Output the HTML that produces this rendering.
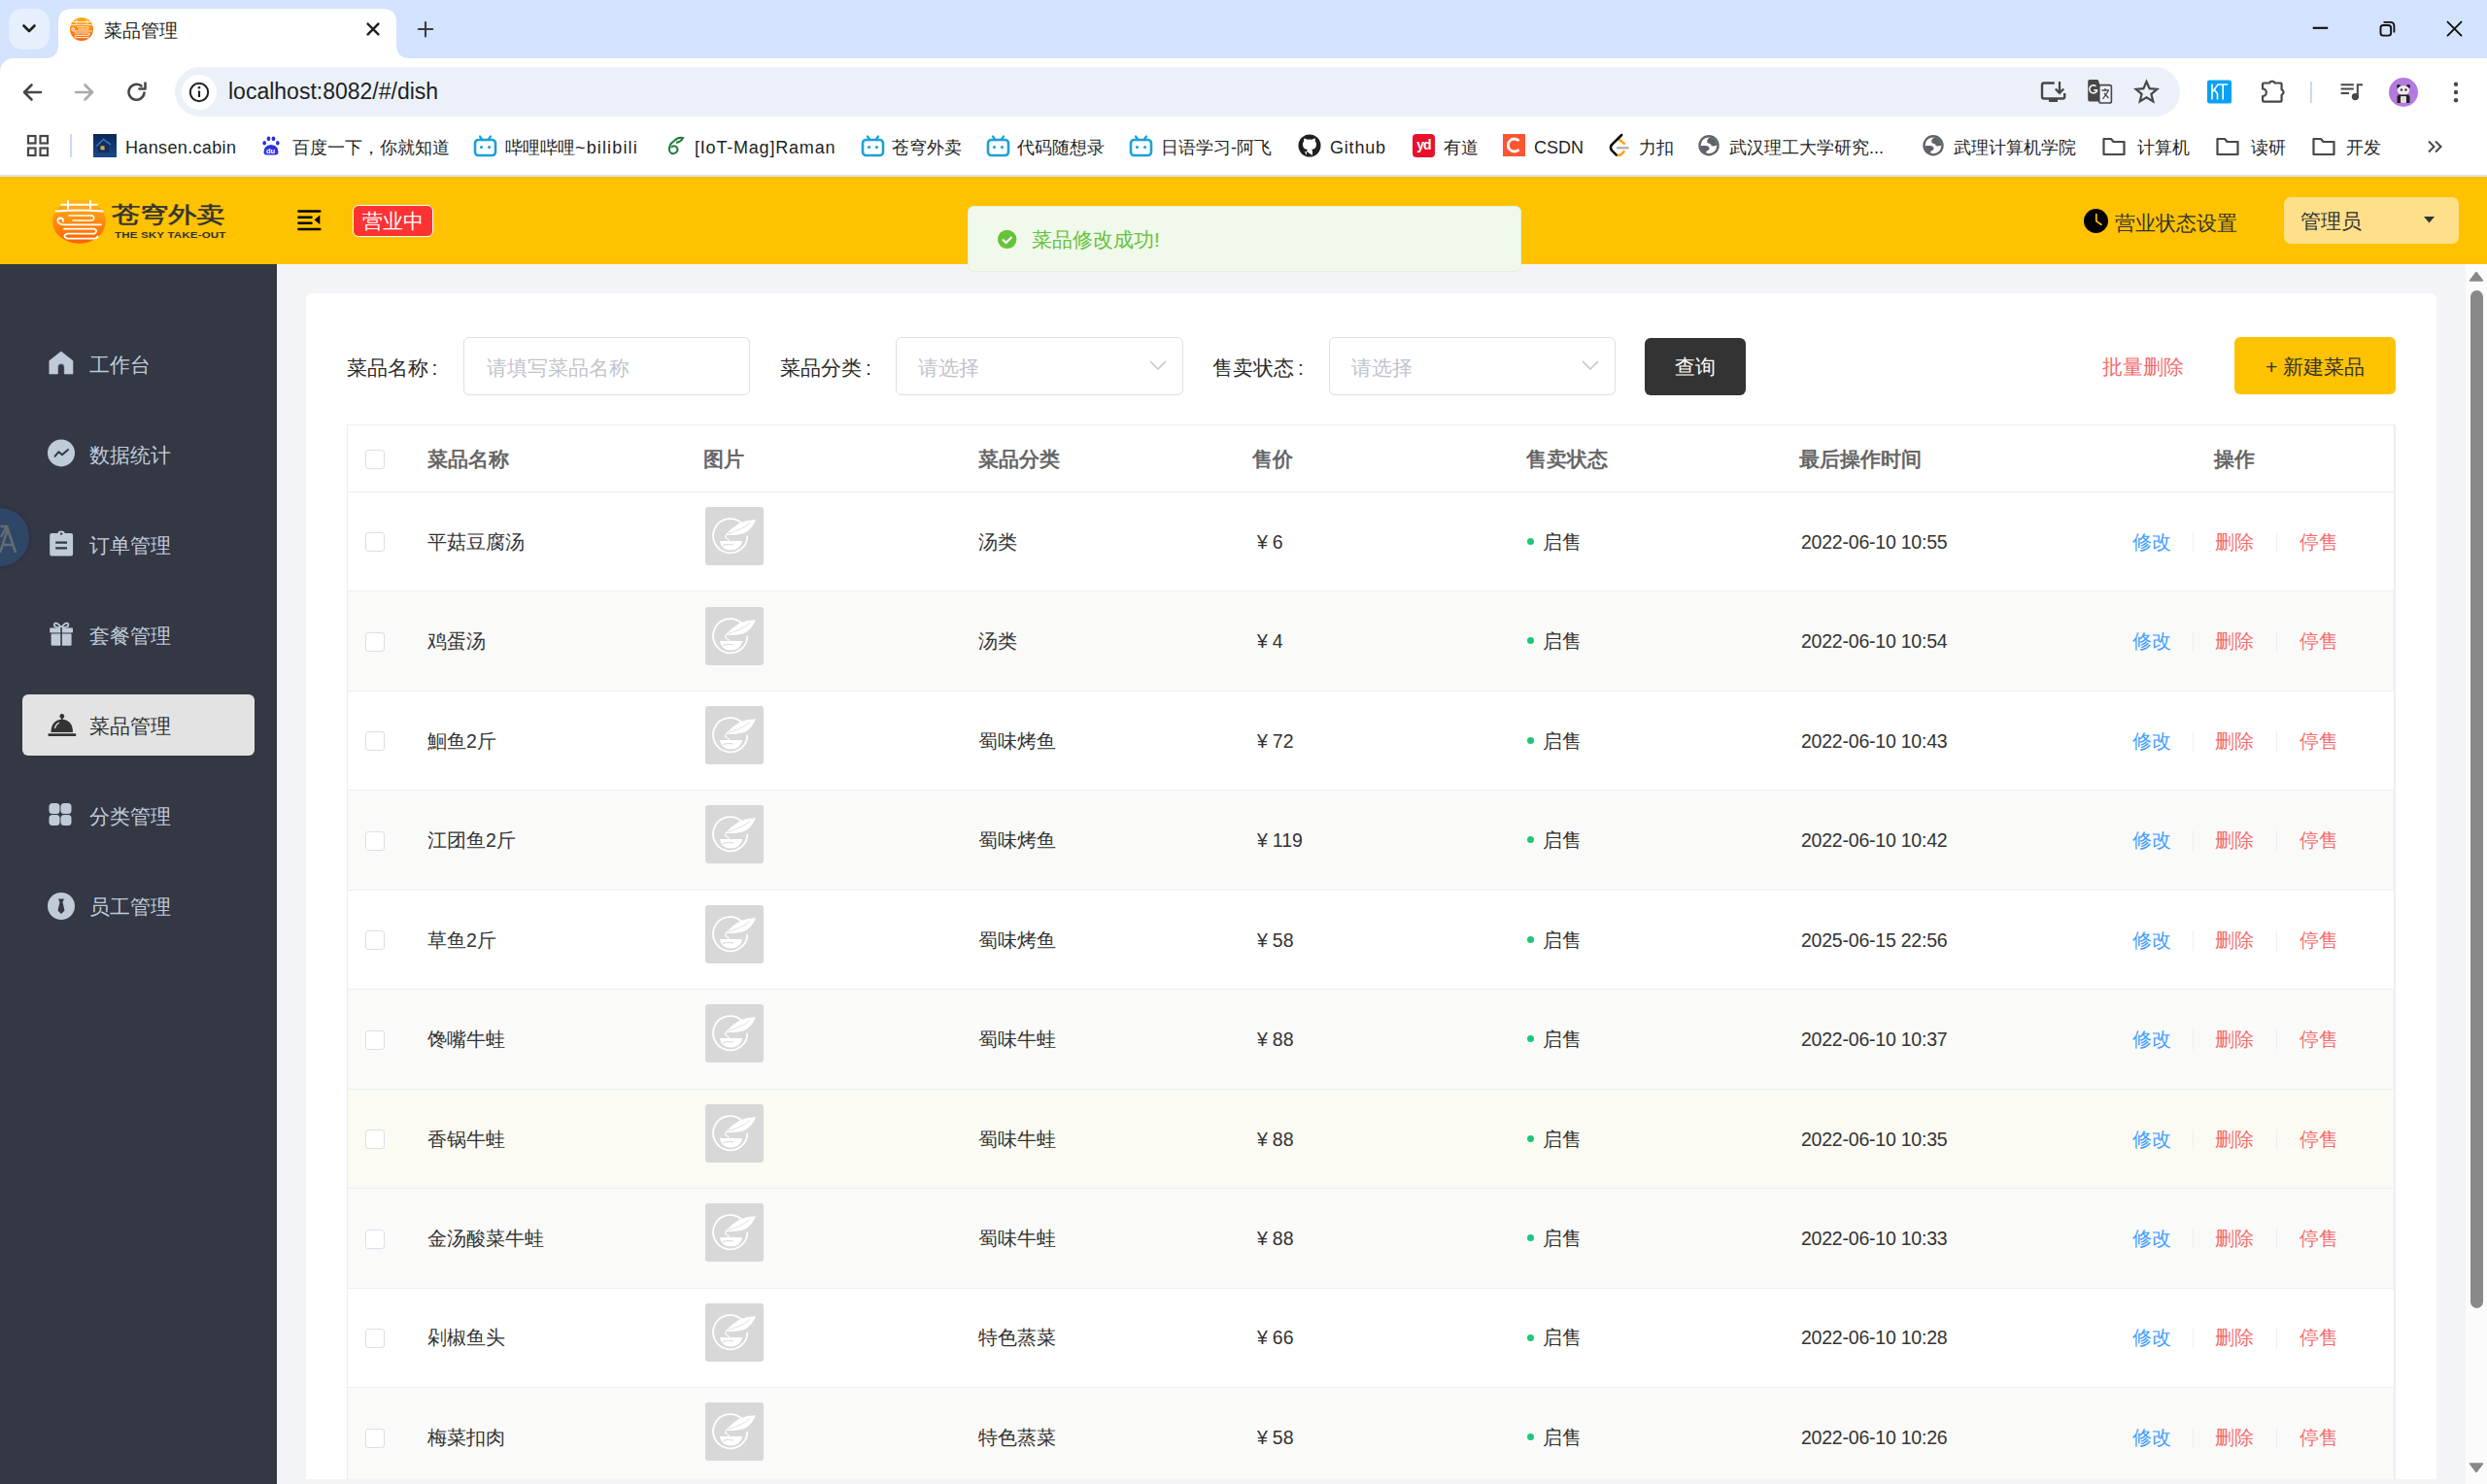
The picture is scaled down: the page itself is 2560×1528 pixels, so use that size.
<!DOCTYPE html>
<html><head><meta charset="utf-8"><title>菜品管理</title>
<style>
*{box-sizing:border-box;margin:0;padding:0}
html,body{width:2560px;height:1528px;overflow:hidden;background:#fff}
body{position:relative;font-family:"Liberation Sans",sans-serif;color:#333}
.a{position:absolute}
.t{position:absolute;white-space:nowrap}
svg{position:absolute;overflow:visible}
/* chrome */
#tabs{left:0;top:0;width:2560px;height:60px;background:#d3e3fd}
#tb{left:0;top:60px;width:2560px;height:120px;background:#fff}
#bline{left:0;top:180px;width:2560px;height:2px;background:#dfe1e5}
.bm{font-size:18px;color:#1f1f1f;top:139.5px;height:24px;line-height:24px}
/* header */
#hdr{left:0;top:182px;width:2560px;height:90px;background:#ffc200}
#side{left:0;top:272px;width:285px;height:1256px;background:#343744}
#main{left:285px;top:272px;width:2253px;height:1256px;background:#f3f4f7}
#sb{left:2538px;top:272px;width:22px;height:1256px;background:#fbfbfb}
.mi{left:92px;font-size:21px;color:#bfcbd9;height:30px;line-height:30px}
#card{left:315px;top:302px;width:2193px;height:1221px;background:#fff;border-radius:6px 6px 0 0}
.lbl{font-size:21px;color:#2a2a2a;height:30px;line-height:30px;top:363.5px}
.inp{top:347px;height:60px;border:1.5px solid #dcdfe6;border-radius:6px;background:#fff}
.ph{font-size:21px;color:#c0c4cc;height:30px;line-height:30px;top:363.5px}
.th{font-size:21px;font-weight:bold;color:#666;top:458px;height:30px;line-height:30px}
.row{position:absolute;left:357px;width:2108px;height:102px}
.rbg{position:absolute;left:358px;width:2106px}
.rbd{position:absolute;left:358px;width:2106px;height:1px;background:#ebeef5}
.cb{position:absolute;left:19px;width:20px;height:20px;border:1.5px solid #dcdfe6;border-radius:3px;background:#fff}
.td{position:absolute;font-size:19.5px;color:#333;height:30px;line-height:30px;white-space:nowrap}
.img{position:absolute;left:369px;width:60px;height:60px;background:#d8d8d8;border-radius:3px}
.dot{position:absolute;left:1215px;width:7px;height:7px;border-radius:50%;background:#1dc779}
.sep{position:absolute;width:1.5px;height:21px;background:#ebeef5}
.blue{color:#419eff}.red{color:#f56c6c}
</style></head><body>

<!-- ============ BROWSER CHROME ============ -->
<div id="tabs" class="a"></div>
<div class="a" style="left:9px;top:9px;width:42px;height:42px;border-radius:14px;background:#e7eefc"></div>
<svg style="left:0;top:0" width="60" height="60"><path d="M24.5 26.5 L30 32 L35.5 26.5" fill="none" stroke="#1f1f1f" stroke-width="2.6" stroke-linecap="round" stroke-linejoin="round"/></svg>
<!-- active tab -->
<svg style="left:46px;top:9px" width="376" height="52"><path d="M0 51 Q14 51 14 37 L14 14 Q14 0 28 0 L348 0 Q362 0 362 14 L362 37 Q362 51 376 51 Z" fill="#fff"/></svg>
<svg style="left:72px;top:18px" width="24" height="24"><defs><linearGradient id="fg" x1="0" y1="0" x2="0" y2="1"><stop offset="0" stop-color="#ffae1a"/><stop offset="1" stop-color="#ff5f00"/></linearGradient></defs><circle cx="12" cy="12" r="12" fill="url(#fg)"/><g fill="none" stroke="#fff" stroke-linecap="round" opacity=".8" transform="translate(12,12.5) scale(0.46) translate(-81.4,-228)"><path d="M63 210.8 H100 M70 207 V214.5 M93 207 V214.5" stroke-width="2.4"/><path d="M57.8 217.6 Q81 215.5 105.5 217.6" stroke-width="2.4"/><path d="M71 222 H95 Q98.5 224.5 95 227 H75" stroke-width="2.4"/><path d="M104 231.3 H69 Q61 232 59.5 228 Q59 224.5 62.5 224.5 Q65.5 225 65 228" stroke-width="2.6"/><path d="M66 235.6 H97 Q101.5 238 97 240.6 H69 Q63.5 243 69 245.6 H97" stroke-width="2.6"/></g></svg>
<div class="t" style="left:107px;top:18px;font-size:18.5px;height:28px;line-height:28px;color:#1f1f1f">菜品管理</div>
<svg style="left:372px;top:18px" width="24" height="24"><path d="M6.8 6.8 L17.2 17.2 M17.2 6.8 L6.8 17.2" stroke="#1f1f1f" stroke-width="2.4" stroke-linecap="square"/></svg>
<svg style="left:425px;top:18px" width="24" height="24"><path d="M13 5 V19.5 M5.8 12 H20.2" stroke="#3c3c3c" stroke-width="2.1" stroke-linecap="round"/></svg>
<!-- window controls -->
<svg style="left:2360px;top:0" width="200" height="60"><path d="M20.7 28.8 H36.2" stroke="#111" stroke-width="2.2"/><rect x="90.5" y="26" width="10.6" height="10.6" rx="2.6" fill="none" stroke="#111" stroke-width="1.9"/><path d="M93.5 22.9 H100.5 Q104.4 22.9 104.4 26.8 V33.5" fill="none" stroke="#111" stroke-width="1.9"/><path d="M159.5 22.6 L173.5 36.6 M173.5 22.6 L159.5 36.6" stroke="#111" stroke-width="1.9" stroke-linecap="round"/></svg>



<!-- toolbar -->
<div id="tb" class="a"></div>
<svg style="left:0;top:60px" width="16" height="16"><path d="M0 0 H14 A14 14 0 0 0 0 14 Z" fill="#d3e3fd"/></svg>
<svg style="left:15px;top:77px" width="36" height="36"><path d="M27 18 H10 M17.5 10.5 L10 18 L17.5 25.5" fill="none" stroke="#474747" stroke-width="2.6" stroke-linecap="round" stroke-linejoin="round"/></svg>
<svg style="left:69px;top:77px" width="36" height="36"><path d="M9 18 H26 M18.5 10.5 L26 18 L18.5 25.5" fill="none" stroke="#a8a8a8" stroke-width="2.6" stroke-linecap="round" stroke-linejoin="round"/></svg>
<svg style="left:123px;top:77px" width="36" height="36"><path d="M25.5 18.5 A8 8 0 1 1 22.5 11.5" fill="none" stroke="#474747" stroke-width="2.6" stroke-linecap="round"/><path d="M26.5 8.5 V14.5 H20.5" fill="none" stroke="#474747" stroke-width="2.6" stroke-linecap="round" stroke-linejoin="round"/></svg>
<div class="a" style="left:180px;top:69px;width:2064px;height:51px;border-radius:25.5px;background:#ecf1f9"></div>
<div class="a" style="left:187px;top:76.5px;width:36px;height:36px;border-radius:50%;background:#fff"></div>
<svg style="left:187px;top:76.5px" width="36" height="36"><circle cx="18" cy="18" r="9.2" fill="none" stroke="#1f1f1f" stroke-width="2"/><path d="M18 16.5 V23" stroke="#1f1f1f" stroke-width="2.2"/><circle cx="18" cy="13.2" r="1.3" fill="#1f1f1f"/></svg>
<div class="t" style="left:235px;top:78px;font-size:23px;height:32px;line-height:32px;color:#1f1f1f">localhost:8082/#/dish</div>
<!-- right toolbar icons -->
<svg style="left:2090px;top:70px" width="40" height="40"><path d="M24.8 15.5 H14 Q12 15.5 12 17.5 V29.5 Q12 31.5 14 31.5 H33.2 Q35.2 31.5 35.2 29.5 V26" fill="none" stroke="#474747" stroke-width="2.4"/><rect x="19" y="31.5" width="9" height="3.5" fill="#474747"/><path d="M30 14 V25.5 M25.8 21.5 L30 25.8 L34.2 21.5" fill="none" stroke="#474747" stroke-width="2.3"/></svg>
<svg style="left:2140px;top:70px" width="40" height="40"><path d="M11 12 H19.5 L21.5 17 V31.5 L23 34.5 H11 Q9.2 34.5 9.2 32.5 V14 Q9.2 12 11 12 Z" fill="#474747"/><rect x="20.8" y="17.6" width="12.6" height="18.4" rx="1.8" fill="#edf2fa" stroke="#474747" stroke-width="1.6"/><path d="M18.8 22.5 A4 4 0 1 1 17.5 18.8 M15.2 22.8 H19" fill="none" stroke="#fff" stroke-width="1.5"/><path d="M23.5 23 H31 M27 21 V23 M24.5 32 L30 24 M26 26 L30.5 31" fill="none" stroke="#474747" stroke-width="1.3"/></svg>
<svg style="left:2194px;top:80px" width="30" height="30"><path d="M15.5 4 L18.6 11.2 L26.3 11.8 L20.4 16.8 L22.3 24.4 L15.5 20.3 L8.7 24.4 L10.6 16.8 L4.7 11.8 L12.4 11.2 Z" fill="none" stroke="#474747" stroke-width="2.2" stroke-linejoin="miter"/></svg>
<svg style="left:2272px;top:82px" width="25" height="25"><rect x="0" y="0.5" width="25" height="24" rx="2.5" fill="#0aa0f5"/><path d="M5 4.5 V20.5 M5 13 L11.5 4.5 M7.5 10.5 L10.5 14.5 V20.5 M11.5 5 H21 M16.2 5 V20.5" fill="none" stroke="#fff" stroke-width="1.6"/></svg>
<svg style="left:2320px;top:70px" width="40" height="40"><path d="M10.2 15.5 H16 A3 3 0 0 1 21.6 15.5 H27.5 Q28.6 15.5 28.6 16.6 V22.2 A3 3 0 0 1 28.6 27.8 V33.5 Q28.6 34.6 27.5 34.6 H10.2 Q9.1 34.6 9.1 33.5 V29 A3.6 3.6 0 0 0 9.1 21.5 V16.6 Q9.1 15.5 10.2 15.5 Z" fill="none" stroke="#474747" stroke-width="2.2" stroke-linejoin="round"/></svg>
<div class="a" style="left:2378px;top:84px;width:2px;height:22px;background:#c7daf8"></div>
<svg style="left:2400px;top:70px" width="40" height="40"><path d="M9.6 17.2 H22.8 M9.6 21.4 H22.8 M9.6 25.9 H18" stroke="#474747" stroke-width="2"/><path d="M26.8 31 V17.2 H32" fill="none" stroke="#474747" stroke-width="2"/><circle cx="24.4" cy="29.6" r="3.6" fill="#474747"/></svg>
<div class="a" style="left:2459px;top:80px;width:30px;height:30px;border-radius:50%;background:#b47ae0"></div>
<svg style="left:2459px;top:80px" width="30" height="30"><circle cx="10" cy="9" r="2" fill="#222"/><circle cx="20" cy="9" r="2" fill="#222"/><ellipse cx="15" cy="13" rx="6.2" ry="4.8" fill="#eee"/><circle cx="13" cy="12.5" r="1.2" fill="#333"/><circle cx="17.5" cy="12.5" r="1.2" fill="#333"/><path d="M8.5 26 V20 Q8.5 17.5 11 17.5 H19 Q21.5 17.5 21.5 20 V26 Z" fill="#222"/><rect x="12" y="19" width="6" height="7" rx="1" fill="#ddd"/></svg>
<svg style="left:2513px;top:80px" width="30" height="30"><circle cx="15" cy="6.8" r="2.2" fill="#474747"/><circle cx="15" cy="15" r="2.2" fill="#474747"/><circle cx="15" cy="23.3" r="2.2" fill="#474747"/></svg>

<!-- bookmarks -->
<svg style="left:26px;top:137px" width="26" height="26"><g fill="none" stroke="#474747" stroke-width="2.2"><rect x="3" y="3" width="7.5" height="7.5"/><rect x="15.5" y="3" width="7.5" height="7.5"/><rect x="3" y="15.5" width="7.5" height="7.5"/><rect x="15.5" y="15.5" width="7.5" height="7.5"/></g></svg>
<div class="a" style="left:72px;top:138px;width:2px;height:24px;background:#c7daf8"></div>
<div class="a" style="left:96px;top:138px;width:24px;height:24px;background:linear-gradient(#0a2656,#1a4a8a)"></div>
<svg style="left:96px;top:138px" width="24" height="24"><path d="M3.5 12.5 L10.5 5.5 L18 11" fill="none" stroke="#3d7fd0" stroke-width="1.4"/><path d="M5 12 L10.5 6.8 L16.5 11.5 V19 H5 Z" fill="#132f5a"/><rect x="7.5" y="12.3" width="4" height="4" fill="#ff9a30"/><rect x="9.6" y="14.4" width="1.8" height="1.8" fill="#40d8ff"/></svg>
<div class="t bm" style="left:129px;letter-spacing:0.35px">Hansen.cabin</div>
<svg style="left:267px;top:139px" width="24" height="24"><g fill="#2932e1"><ellipse cx="9.5" cy="3.8" rx="1.9" ry="2.4"/><ellipse cx="14.5" cy="3.8" rx="1.9" ry="2.4"/><ellipse cx="5.2" cy="8.3" rx="1.8" ry="2.2"/><ellipse cx="18.8" cy="8.3" rx="1.8" ry="2.2"/><path d="M4.5 17.5 Q4.5 10.5 12 10 Q19.5 10.5 19.5 17.5 Q19.5 20.5 16.5 20.5 H7.5 Q4.5 20.5 4.5 17.5 Z"/></g><text x="7" y="18.6" font-size="7.5" fill="#fff" font-family="Liberation Sans" font-weight="bold">du</text></svg>
<div class="t bm" style="left:301px">百度一下，你就知道</div>
<svg class="bili" style="left:487px;top:138px" width="25" height="25"><path d="M7 2.5 L9.5 6 M18 2.5 L15.5 6" stroke="#1da1d8" stroke-width="2.2" stroke-linecap="round"/><rect x="2" y="6" width="21" height="16" rx="3.5" fill="none" stroke="#1da1d8" stroke-width="2.6"/><circle cx="8.5" cy="13.5" r="1.6" fill="#1da1d8"/><circle cx="16.5" cy="13.5" r="1.6" fill="#1da1d8"/></svg>
<div class="t bm" style="left:520px">哔哩哔哩<span style="letter-spacing:1.15px">~bilibili</span></div>
<svg style="left:684px;top:139px" width="22" height="24"><path d="M10 6 Q4 10 5 16 Q7 21 12 18 Q15 15 12 12 Q9 10 7 13 M10 6 Q14 2 19 3 Q17 7 12 8" fill="none" stroke="#1c7a3a" stroke-width="2"/></svg>
<div class="t bm" style="left:715px;letter-spacing:0.8px">[IoT-Mag]Raman</div>
<svg style="left:886px;top:138px" width="25" height="25"><path d="M7 2.5 L9.5 6 M18 2.5 L15.5 6" stroke="#1da1d8" stroke-width="2.2" stroke-linecap="round"/><rect x="2" y="6" width="21" height="16" rx="3.5" fill="none" stroke="#1da1d8" stroke-width="2.6"/><circle cx="8.5" cy="13.5" r="1.6" fill="#1da1d8"/><circle cx="16.5" cy="13.5" r="1.6" fill="#1da1d8"/></svg>
<div class="t bm" style="left:918px">苍穹外卖</div>
<svg style="left:1015px;top:138px" width="25" height="25"><path d="M7 2.5 L9.5 6 M18 2.5 L15.5 6" stroke="#1da1d8" stroke-width="2.2" stroke-linecap="round"/><rect x="2" y="6" width="21" height="16" rx="3.5" fill="none" stroke="#1da1d8" stroke-width="2.6"/><circle cx="8.5" cy="13.5" r="1.6" fill="#1da1d8"/><circle cx="16.5" cy="13.5" r="1.6" fill="#1da1d8"/></svg>
<div class="t bm" style="left:1047px">代码随想录</div>
<svg style="left:1162px;top:138px" width="25" height="25"><path d="M7 2.5 L9.5 6 M18 2.5 L15.5 6" stroke="#1da1d8" stroke-width="2.2" stroke-linecap="round"/><rect x="2" y="6" width="21" height="16" rx="3.5" fill="none" stroke="#1da1d8" stroke-width="2.6"/><circle cx="8.5" cy="13.5" r="1.6" fill="#1da1d8"/><circle cx="16.5" cy="13.5" r="1.6" fill="#1da1d8"/></svg>
<div class="t bm" style="left:1195px">日语学习-阿飞</div>
<svg style="left:1336px;top:138px" width="24" height="24"><circle cx="12" cy="12" r="11.5" fill="#1f1f1f"/><path d="M9 22 V18.5 Q6 18 5.5 15.5 M15 22 V18 Q15 16.5 14 16 Q19 15.5 19 10.5 Q19 8.5 17.8 7.5 Q18.2 5.5 17.5 4.5 Q16 4.5 14.5 5.8 Q12 5.2 9.5 5.8 Q8 4.5 6.5 4.5 Q5.8 5.5 6.2 7.5 Q5 8.5 5 10.5 Q5 15.5 10 16 Q9 16.5 9 18" fill="#fff"/></svg>
<div class="t bm" style="left:1369px;letter-spacing:0.8px">Github</div>
<div class="a" style="left:1454px;top:138px;width:23px;height:24px;border-radius:4px;background:#e8112d"></div>
<div class="t" style="left:1454px;top:138px;width:23px;font-size:14px;font-weight:bold;color:#fff;height:22px;line-height:22px;text-align:center;letter-spacing:-1px">yd</div>
<div class="t bm" style="left:1486px">有道</div>
<div class="a" style="left:1547px;top:138px;width:23px;height:23px;background:#fc5531"></div>
<svg style="left:1547px;top:138px" width="23" height="23"><path d="M16.5 7 A6.5 6.5 0 1 0 16.5 16" fill="none" stroke="#fff" stroke-width="2.8"/></svg>
<div class="t bm" style="left:1579px">CSDN</div>
<svg style="left:1650px;top:134px" width="30" height="32"><path d="M15.1 18.3 H25.6" stroke="#b3b3b3" stroke-width="2.5" stroke-linecap="round"/><path d="M16.6 9.8 L21.8 13.8 M13.8 25.6 Q17.5 27.5 21.6 22" fill="none" stroke="#ffa116" stroke-width="2.5" stroke-linecap="round"/><path d="M19.2 5 L9 15 Q6.8 17.8 9 20.8 L13.6 25.4" fill="none" stroke="#000" stroke-width="2.5" stroke-linecap="round"/></svg>
<div class="t bm" style="left:1687px">力扣</div>
<svg style="left:1744px;top:136px" width="30" height="30"><circle cx="15" cy="13.8" r="10.7" fill="#5f6368"/><circle cx="15" cy="13.8" r="8.4" fill="#fff"/><path d="M16.5 5.5 Q13 6.5 13.2 10.2 Q13.5 11.8 16.3 12 Q17.3 12.5 17.3 13.6 Q18.5 14.8 20.5 14.3 Q22.6 13.9 23.3 13.4 A8.4 8.4 0 0 0 16.5 5.5 Z" fill="#5f6368"/><path d="M6.7 14 H11.5 Q15.5 14.2 15.5 17 Q15.5 18.8 13.5 19 Q12 19.4 12.2 22.2 A8.4 8.4 0 0 1 6.7 14 Z" fill="#5f6368"/></svg>
<div class="t bm" style="left:1780px">武汉理工大学研究...</div>
<svg style="left:1975px;top:136px" width="30" height="30"><circle cx="15" cy="13.8" r="10.7" fill="#5f6368"/><circle cx="15" cy="13.8" r="8.4" fill="#fff"/><path d="M16.5 5.5 Q13 6.5 13.2 10.2 Q13.5 11.8 16.3 12 Q17.3 12.5 17.3 13.6 Q18.5 14.8 20.5 14.3 Q22.6 13.9 23.3 13.4 A8.4 8.4 0 0 0 16.5 5.5 Z" fill="#5f6368"/><path d="M6.7 14 H11.5 Q15.5 14.2 15.5 17 Q15.5 18.8 13.5 19 Q12 19.4 12.2 22.2 A8.4 8.4 0 0 1 6.7 14 Z" fill="#5f6368"/></svg>
<div class="t bm" style="left:2011px">武理计算机学院</div>
<svg style="left:2163px;top:139px" width="26" height="24"><path d="M2.5 4 H10 L12.5 7 H23.5 V20 H2.5 Z" fill="none" stroke="#474747" stroke-width="2.2" stroke-linejoin="round"/></svg>
<div class="t bm" style="left:2200px">计算机</div>
<svg style="left:2280px;top:139px" width="26" height="24"><path d="M2.5 4 H10 L12.5 7 H23.5 V20 H2.5 Z" fill="none" stroke="#474747" stroke-width="2.2" stroke-linejoin="round"/></svg>
<div class="t bm" style="left:2317px">读研</div>
<svg style="left:2379px;top:139px" width="26" height="24"><path d="M2.5 4 H10 L12.5 7 H23.5 V20 H2.5 Z" fill="none" stroke="#474747" stroke-width="2.2" stroke-linejoin="round"/></svg>
<div class="t bm" style="left:2415px">开发</div>
<svg style="left:2496px;top:139px" width="22" height="24"><path d="M4 6.5 L9.5 12 L4 17.5 M11 6.5 L16.5 12 L11 17.5" fill="none" stroke="#474747" stroke-width="2"/></svg>
<div id="bline" class="a"></div>

<!-- ============ APP HEADER ============ -->
<div id="hdr" class="a"></div>
<svg style="left:50px;top:200px" width="64" height="56"><defs><linearGradient id="lg" x1="0" y1="0" x2="0" y2="1"><stop offset="0" stop-color="#ffb81c"/><stop offset="1" stop-color="#ff5f00"/></linearGradient></defs><ellipse cx="31.4" cy="28" rx="27.4" ry="22.8" fill="url(#lg)"/><g fill="none" stroke="#fff" stroke-linecap="round" transform="translate(-50,-200)"><path d="M63 210.8 H100 M70 207 V214.5 M93 207 V214.5" stroke-width="2"/><path d="M57.8 217.6 Q81 215.5 105.5 217.6" stroke-width="2"/><path d="M71 222 H95 Q98.5 224.5 95 227 H75" stroke-width="1.6"/><path d="M104 231.3 H69 Q61 232 59.5 228 Q59 224.5 62.5 224.5 Q65.5 225 65 228" stroke-width="1.8"/><path d="M66 235.6 H97 Q101.5 238 97 240.6 H69 Q63.5 243 69 245.6 H97 Q100 245.6 100.5 243.5" stroke-width="1.8"/></g></svg>
<div class="t" style="left:115px;top:203px;font-size:29px;font-weight:normal;-webkit-text-stroke:0.7px #333;color:#333;height:36px;line-height:36px;transform:scaleY(0.78);transform-origin:0 0;top:207px">苍穹外卖</div>
<div class="t" style="left:118px;top:235px;font-size:11.5px;font-weight:bold;color:#333;height:14px;line-height:14px;letter-spacing:0.2px;transform:scaleY(0.8);transform-origin:0 50%">THE SKY TAKE-OUT</div>
<svg style="left:300px;top:210px" width="36" height="34"><g stroke="#000" stroke-width="2.5" stroke-linecap="round"><path d="M7.4 7.4 H29.3 M7.4 25.9 H29.3 M7.4 13.8 H20.5 M7.4 19.7 H20.5"/></g><path d="M29.3 11.4 V21 L23.6 16.2 Z" fill="#000"/></svg>
<div class="a" style="left:363px;top:211px;width:83px;height:33px;background:#fd3333;border-radius:6px;border:1.2px solid #fff"></div>
<div class="t" style="left:363px;top:212px;width:83px;text-align:center;font-size:21px;color:#fff;height:31px;line-height:31px">营业中</div>
<svg style="left:2144px;top:214px" width="27" height="27"><circle cx="13.5" cy="13.5" r="12.5" fill="#000"/><path d="M13.8 6.6 V13.6 L18.9 17.2" fill="none" stroke="#ffc200" stroke-width="1.7" stroke-linecap="round"/></svg>
<div class="t" style="left:2177px;top:215px;font-size:21px;color:#333;height:30px;line-height:30px">营业状态设置</div>
<div class="a" style="left:2351px;top:203px;width:180px;height:48px;border-radius:7px;background:#ffe08a"></div>
<div class="t" style="left:2368px;top:213px;font-size:21px;color:#333;height:30px;line-height:30px">管理员</div>
<svg style="left:2490px;top:218px" width="22" height="16"><path d="M5 5 H16 L10.5 11.5 Z" fill="#333"/></svg>

<!-- toast placeholder (added later, on top) -->

<!-- ============ SIDEBAR ============ -->
<div id="side" class="a"></div>
<div id="main" class="a"></div>

<!-- sidebar menu -->
<svg style="left:49px;top:360px" width="28" height="28"><path d="M13.9 1.9 L26 11.5 V25 H17.3 V18 A3.4 3.4 0 0 0 10.5 18 V25 H1.8 V11.5 Z" fill="#bfcbd9" stroke="#bfcbd9" stroke-width="0.6" stroke-linejoin="round"/></svg>
<div class="t mi" style="top:361px">工作台</div>
<svg style="left:49px;top:452px" width="28" height="30"><circle cx="14" cy="14.4" r="14" fill="#bfcbd9"/><path d="M7.5 17.8 L11.5 13.2 L15 16.2 L21 11" fill="none" stroke="#343744" stroke-width="2" stroke-linecap="round" stroke-linejoin="round"/></svg>
<div class="t mi" style="top:454px">数据统计</div>
<svg style="left:49px;top:545px" width="28" height="30"><path d="M4.2 4 H10.5 Q11 1.6 14.1 1.6 Q17.2 1.6 17.7 4 H24.1 Q26.1 4 26.1 6 V25.4 Q26.1 27.4 24.1 27.4 H4.2 Q2.2 27.4 2.2 25.4 V6 Q2.2 4 4.2 4 Z" fill="#bfcbd9"/><circle cx="14.1" cy="4.6" r="1.2" fill="#343744"/><path d="M8.2 13.6 H20 M8.2 19.4 H20" stroke="#343744" stroke-width="2.2"/></svg>
<div class="t mi" style="top:547px">订单管理</div>
<svg style="left:49px;top:639px" width="28" height="28"><g fill="#bfcbd9"><rect x="2.2" y="7.5" width="23.8" height="5" rx="0.8"/><rect x="3.6" y="13.6" width="21" height="12.1" rx="0.8"/></g><path d="M14.1 7.2 Q10 1.5 7.5 2.8 Q5.8 4.5 8 6.3 Q10.5 7.4 14.1 7.2 Q17.7 7.4 20.2 6.3 Q22.4 4.5 20.7 2.8 Q18.2 1.5 14.1 7.2 Z" fill="none" stroke="#bfcbd9" stroke-width="1.8"/><path d="M14.1 7 V26" stroke="#343744" stroke-width="1.6"/></svg>
<div class="t mi" style="top:640px">套餐管理</div>
<div class="a" style="left:23px;top:715px;width:239px;height:63px;border-radius:6px;background:#e3e3e3"></div>
<svg style="left:48px;top:733px" width="32" height="28"><path d="M4.5 21 Q4.5 8.5 15.8 7.8 Q27 8.5 27 21 Z" fill="#333"/><circle cx="15.8" cy="4.5" r="2.4" fill="#333"/><rect x="15" y="4.5" width="1.6" height="4" fill="#333"/><rect x="1.4" y="22.3" width="29" height="2.8" rx="1.3" fill="#333"/><path d="M8.5 17 Q9.5 12.5 13 11.2" stroke="#ddd" stroke-width="1.3" fill="none"/></svg>
<div class="t mi" style="top:733px;color:#333">菜品管理</div>
<svg style="left:48px;top:825px" width="28" height="28"><g fill="#bfcbd9"><rect x="2.5" y="2" width="11" height="11" rx="3.5"/><rect x="14.5" y="2" width="11" height="11" rx="3.5"/><rect x="2.5" y="14" width="11" height="11" rx="3.5"/><rect x="14.5" y="14" width="11" height="11" rx="3.5"/></g></svg>
<div class="t mi" style="top:826px">分类管理</div>
<svg style="left:48px;top:918px" width="28" height="30"><circle cx="15" cy="15" r="14" fill="#bfcbd9"/><path d="M12 7.5 H18 L16.5 11 L18.5 19.5 L15 23 L11.5 19.5 L13.5 11 Z" fill="#343744"/></svg>
<div class="t mi" style="top:919px">员工管理</div>
<!-- translate float -->
<div class="a" style="left:-30px;top:523px;width:60px;height:60px;border-radius:50%;background:#2f4666;box-shadow:0 0 5px rgba(0,0,0,.18)"></div>
<svg style="left:0;top:535px" width="20" height="40"><path d="M0.5 7 H7 L1 18" fill="none" stroke="#666b73" stroke-width="2.4"/><path d="M0 34 L8 10 L16 34 M3 26 H13" fill="none" stroke="#666b73" stroke-width="2.6"/></svg>

<!-- card -->
<div id="card" class="a"></div>
<div class="t lbl" style="left:356.5px">菜品名称<span style="margin-left:4px">:</span></div>
<div class="a inp" style="left:477px;width:295px"></div>
<div class="t ph" style="left:501px">请填写菜品名称</div>
<div class="t lbl" style="left:803px">菜品分类<span style="margin-left:4px">:</span></div>
<div class="a inp" style="left:922px;width:296px"></div>
<div class="t ph" style="left:945px">请选择</div>
<svg style="left:1180px;top:366px" width="24" height="22"><path d="M4 6 L12 14 L20 6" fill="none" stroke="#c0c4cc" stroke-width="1.5"/></svg>
<div class="t lbl" style="left:1248px">售卖状态<span style="margin-left:4px">:</span></div>
<div class="a inp" style="left:1368px;width:295px"></div>
<div class="t ph" style="left:1391px">请选择</div>
<svg style="left:1625px;top:366px" width="24" height="22"><path d="M4 6 L12 14 L20 6" fill="none" stroke="#c0c4cc" stroke-width="1.5"/></svg>
<div class="a" style="left:1693px;top:348px;width:104px;height:58.5px;border-radius:6px;background:#333"></div>
<div class="t" style="left:1693px;top:363px;width:104px;text-align:center;font-size:21px;color:#fff;height:30px;line-height:30px">查询</div>
<div class="t lbl" style="left:2164px;top:362.5px;color:#f56c6c">批量删除</div>
<div class="a" style="left:2300px;top:347px;width:166px;height:58.5px;border-radius:6px;background:#ffc200"></div>
<div class="t" style="left:2300px;top:363px;width:166px;text-align:center;font-size:21px;color:#333;height:30px;line-height:30px">+ 新建菜品</div>

<!-- table -->
<div class="a" style="left:357px;top:437px;width:2108px;height:1090px;border:1.5px solid #ebeef5;border-bottom:none;background:#fff"></div>
<div class="a" style="left:357px;top:506px;width:2108px;height:1px;background:#ebeef5"></div>
<div class="cb" style="left:376px;top:463px"></div>
<div class="t th" style="left:440px">菜品名称</div>
<div class="t th" style="left:724px">图片</div>
<div class="t th" style="left:1007px">菜品分类</div>
<div class="t th" style="left:1289px">售价</div>
<div class="t th" style="left:1571px">售卖状态</div>
<div class="t th" style="left:1852px">最后操作时间</div>
<div class="t th" style="left:2279px">操作</div>
<div class="rbg" style="top:507px;height:101px;background:#fff"></div>
<div class="rbd" style="top:608px"></div>
<div class="row" style="top:506.68px"><div class="cb" style="top:41.7px"></div><div class="td" style="left:83px;top:36px">平菇豆腐汤</div><div class="img" style="top:15.4px"><svg width="60" height="60" style="left:0;top:0"><use href="#dish"/></svg></div><div class="td" style="left:650px;top:36px">汤类</div><div class="td" style="left:937px;top:36px">¥<span style="margin-left:5px">6</span></div><div class="dot" style="top:47.3px"></div><div class="td" style="left:1231px;top:36px">启售</div><div class="td" style="left:1497px;top:36px;letter-spacing:-0.22px">2022-06-10 10:55</div><div class="td blue" style="left:1838px;top:36px">修改</div><div class="sep" style="left:1899.7px;top:41.3px"></div><div class="td red" style="left:1923px;top:36px">删除</div><div class="sep" style="left:1985.7px;top:41.3px"></div><div class="td red" style="left:2010px;top:36px">停售</div></div>
<div class="rbg" style="top:609px;height:102px;background:#fafaf9"></div>
<div class="rbd" style="top:711px"></div>
<div class="row" style="top:609.15px"><div class="cb" style="top:41.7px"></div><div class="td" style="left:83px;top:36px">鸡蛋汤</div><div class="img" style="top:15.4px"><svg width="60" height="60" style="left:0;top:0"><use href="#dish"/></svg></div><div class="td" style="left:650px;top:36px">汤类</div><div class="td" style="left:937px;top:36px">¥<span style="margin-left:5px">4</span></div><div class="dot" style="top:47.3px"></div><div class="td" style="left:1231px;top:36px">启售</div><div class="td" style="left:1497px;top:36px;letter-spacing:-0.22px">2022-06-10 10:54</div><div class="td blue" style="left:1838px;top:36px">修改</div><div class="sep" style="left:1899.7px;top:41.3px"></div><div class="td red" style="left:1923px;top:36px">删除</div><div class="sep" style="left:1985.7px;top:41.3px"></div><div class="td red" style="left:2010px;top:36px">停售</div></div>
<div class="rbg" style="top:712px;height:101px;background:#fff"></div>
<div class="rbd" style="top:813px"></div>
<div class="row" style="top:711.62px"><div class="cb" style="top:41.7px"></div><div class="td" style="left:83px;top:36px">鮰鱼2斤</div><div class="img" style="top:15.4px"><svg width="60" height="60" style="left:0;top:0"><use href="#dish"/></svg></div><div class="td" style="left:650px;top:36px">蜀味烤鱼</div><div class="td" style="left:937px;top:36px">¥<span style="margin-left:5px">72</span></div><div class="dot" style="top:47.3px"></div><div class="td" style="left:1231px;top:36px">启售</div><div class="td" style="left:1497px;top:36px;letter-spacing:-0.22px">2022-06-10 10:43</div><div class="td blue" style="left:1838px;top:36px">修改</div><div class="sep" style="left:1899.7px;top:41.3px"></div><div class="td red" style="left:1923px;top:36px">删除</div><div class="sep" style="left:1985.7px;top:41.3px"></div><div class="td red" style="left:2010px;top:36px">停售</div></div>
<div class="rbg" style="top:814px;height:102px;background:#fafaf9"></div>
<div class="rbd" style="top:916px"></div>
<div class="row" style="top:814.10px"><div class="cb" style="top:41.7px"></div><div class="td" style="left:83px;top:36px">江团鱼2斤</div><div class="img" style="top:15.4px"><svg width="60" height="60" style="left:0;top:0"><use href="#dish"/></svg></div><div class="td" style="left:650px;top:36px">蜀味烤鱼</div><div class="td" style="left:937px;top:36px">¥<span style="margin-left:5px">119</span></div><div class="dot" style="top:47.3px"></div><div class="td" style="left:1231px;top:36px">启售</div><div class="td" style="left:1497px;top:36px;letter-spacing:-0.22px">2022-06-10 10:42</div><div class="td blue" style="left:1838px;top:36px">修改</div><div class="sep" style="left:1899.7px;top:41.3px"></div><div class="td red" style="left:1923px;top:36px">删除</div><div class="sep" style="left:1985.7px;top:41.3px"></div><div class="td red" style="left:2010px;top:36px">停售</div></div>
<div class="rbg" style="top:917px;height:101px;background:#fff"></div>
<div class="rbd" style="top:1018px"></div>
<div class="row" style="top:916.58px"><div class="cb" style="top:41.7px"></div><div class="td" style="left:83px;top:36px">草鱼2斤</div><div class="img" style="top:15.4px"><svg width="60" height="60" style="left:0;top:0"><use href="#dish"/></svg></div><div class="td" style="left:650px;top:36px">蜀味烤鱼</div><div class="td" style="left:937px;top:36px">¥<span style="margin-left:5px">58</span></div><div class="dot" style="top:47.3px"></div><div class="td" style="left:1231px;top:36px">启售</div><div class="td" style="left:1497px;top:36px;letter-spacing:-0.22px">2025-06-15 22:56</div><div class="td blue" style="left:1838px;top:36px">修改</div><div class="sep" style="left:1899.7px;top:41.3px"></div><div class="td red" style="left:1923px;top:36px">删除</div><div class="sep" style="left:1985.7px;top:41.3px"></div><div class="td red" style="left:2010px;top:36px">停售</div></div>
<div class="rbg" style="top:1019px;height:102px;background:#fafaf9"></div>
<div class="rbd" style="top:1121px"></div>
<div class="row" style="top:1019.05px"><div class="cb" style="top:41.7px"></div><div class="td" style="left:83px;top:36px">馋嘴牛蛙</div><div class="img" style="top:15.4px"><svg width="60" height="60" style="left:0;top:0"><use href="#dish"/></svg></div><div class="td" style="left:650px;top:36px">蜀味牛蛙</div><div class="td" style="left:937px;top:36px">¥<span style="margin-left:5px">88</span></div><div class="dot" style="top:47.3px"></div><div class="td" style="left:1231px;top:36px">启售</div><div class="td" style="left:1497px;top:36px;letter-spacing:-0.22px">2022-06-10 10:37</div><div class="td blue" style="left:1838px;top:36px">修改</div><div class="sep" style="left:1899.7px;top:41.3px"></div><div class="td red" style="left:1923px;top:36px">删除</div><div class="sep" style="left:1985.7px;top:41.3px"></div><div class="td red" style="left:2010px;top:36px">停售</div></div>
<div class="rbg" style="top:1122px;height:101px;background:#fbfbf3"></div>
<div class="rbd" style="top:1223px"></div>
<div class="row" style="top:1121.52px"><div class="cb" style="top:41.7px"></div><div class="td" style="left:83px;top:36px">香锅牛蛙</div><div class="img" style="top:15.4px"><svg width="60" height="60" style="left:0;top:0"><use href="#dish"/></svg></div><div class="td" style="left:650px;top:36px">蜀味牛蛙</div><div class="td" style="left:937px;top:36px">¥<span style="margin-left:5px">88</span></div><div class="dot" style="top:47.3px"></div><div class="td" style="left:1231px;top:36px">启售</div><div class="td" style="left:1497px;top:36px;letter-spacing:-0.22px">2022-06-10 10:35</div><div class="td blue" style="left:1838px;top:36px">修改</div><div class="sep" style="left:1899.7px;top:41.3px"></div><div class="td red" style="left:1923px;top:36px">删除</div><div class="sep" style="left:1985.7px;top:41.3px"></div><div class="td red" style="left:2010px;top:36px">停售</div></div>
<div class="rbg" style="top:1224px;height:102px;background:#fafaf9"></div>
<div class="rbd" style="top:1326px"></div>
<div class="row" style="top:1224.00px"><div class="cb" style="top:41.7px"></div><div class="td" style="left:83px;top:36px">金汤酸菜牛蛙</div><div class="img" style="top:15.4px"><svg width="60" height="60" style="left:0;top:0"><use href="#dish"/></svg></div><div class="td" style="left:650px;top:36px">蜀味牛蛙</div><div class="td" style="left:937px;top:36px">¥<span style="margin-left:5px">88</span></div><div class="dot" style="top:47.3px"></div><div class="td" style="left:1231px;top:36px">启售</div><div class="td" style="left:1497px;top:36px;letter-spacing:-0.22px">2022-06-10 10:33</div><div class="td blue" style="left:1838px;top:36px">修改</div><div class="sep" style="left:1899.7px;top:41.3px"></div><div class="td red" style="left:1923px;top:36px">删除</div><div class="sep" style="left:1985.7px;top:41.3px"></div><div class="td red" style="left:2010px;top:36px">停售</div></div>
<div class="rbg" style="top:1327px;height:101px;background:#fff"></div>
<div class="rbd" style="top:1428px"></div>
<div class="row" style="top:1326.47px"><div class="cb" style="top:41.7px"></div><div class="td" style="left:83px;top:36px">剁椒鱼头</div><div class="img" style="top:15.4px"><svg width="60" height="60" style="left:0;top:0"><use href="#dish"/></svg></div><div class="td" style="left:650px;top:36px">特色蒸菜</div><div class="td" style="left:937px;top:36px">¥<span style="margin-left:5px">66</span></div><div class="dot" style="top:47.3px"></div><div class="td" style="left:1231px;top:36px">启售</div><div class="td" style="left:1497px;top:36px;letter-spacing:-0.22px">2022-06-10 10:28</div><div class="td blue" style="left:1838px;top:36px">修改</div><div class="sep" style="left:1899.7px;top:41.3px"></div><div class="td red" style="left:1923px;top:36px">删除</div><div class="sep" style="left:1985.7px;top:41.3px"></div><div class="td red" style="left:2010px;top:36px">停售</div></div>
<div class="rbg" style="top:1429px;height:102px;background:#fafaf9"></div>
<div class="row" style="top:1428.95px"><div class="cb" style="top:41.7px"></div><div class="td" style="left:83px;top:36px">梅菜扣肉</div><div class="img" style="top:15.4px"><svg width="60" height="60" style="left:0;top:0"><use href="#dish"/></svg></div><div class="td" style="left:650px;top:36px">特色蒸菜</div><div class="td" style="left:937px;top:36px">¥<span style="margin-left:5px">58</span></div><div class="dot" style="top:47.3px"></div><div class="td" style="left:1231px;top:36px">启售</div><div class="td" style="left:1497px;top:36px;letter-spacing:-0.22px">2022-06-10 10:26</div><div class="td blue" style="left:1838px;top:36px">修改</div><div class="sep" style="left:1899.7px;top:41.3px"></div><div class="td red" style="left:1923px;top:36px">删除</div><div class="sep" style="left:1985.7px;top:41.3px"></div><div class="td red" style="left:2010px;top:36px">停售</div></div>
<div class="a" style="left:2464.5px;top:437px;width:1.5px;height:1090px;background:#ebeef5"></div>
<div class="a" style="left:285px;top:1523px;width:2253px;height:5px;background:#f3f4f7"></div>

<!-- scrollbar -->
<div id="sb" class="a"></div>
<svg style="left:2538px;top:276px" width="22" height="16"><path d="M4.5 13 L11 4.5 L17.5 13 Z" fill="#888" stroke="#888" stroke-width="1.5" stroke-linejoin="round"/></svg>
<div class="a" style="left:2543px;top:299px;width:13px;height:1048px;border-radius:6.5px;background:#898989"></div>
<svg style="left:2538px;top:1504px" width="22" height="16"><path d="M4.5 3 L11 11.5 L17.5 3 Z" fill="#888" stroke="#888" stroke-width="1.5" stroke-linejoin="round"/></svg>

<!-- toast -->
<div class="a" style="left:996px;top:212px;width:570px;height:68px;border-radius:6px;background:#f0f9eb;border:1.5px solid #e1f3d8"></div>
<svg style="left:1026px;top:236px" width="22" height="22"><circle cx="10.7" cy="10.4" r="9.7" fill="#67c23a"/><path d="M6 10.5 L9.5 14 L15.5 8" fill="none" stroke="#fff" stroke-width="2"/></svg>
<div class="t" style="left:1062px;top:232px;font-size:21px;color:#67c23a;height:30px;line-height:30px">菜品修改成功!</div>

<svg width="0" height="0" style="position:absolute"><defs><g id="dish">
<path d="M37 16.2 A17.6 17.6 0 1 0 43.3 29.7" fill="none" stroke="#fff" stroke-width="1.8"/>
<path d="M20.5 28.8 Q27 21.5 35.5 16.5 Q44 13.2 52 13.3 Q48.5 22 42 26 Q33 30 20.5 28.8 Z" fill="#fff"/>
<path d="M23 27.5 Q37 24 46 16.5" fill="none" stroke="#d8d8d8" stroke-width="0.8"/>
<path d="M21.5 29 Q19.5 31 22 32.5 Q25 33.8 23.5 35" fill="none" stroke="#fff" stroke-width="1.3"/>
<path d="M14.8 35 H38 Q36.5 44.5 26 44.5 Q16.5 44.5 14.8 35 Z" fill="#fff"/>
<path d="M18 39.5 Q23 37.5 29 39" fill="none" stroke="#d8d8d8" stroke-width="1"/>
</g></defs></svg>

</body></html>
